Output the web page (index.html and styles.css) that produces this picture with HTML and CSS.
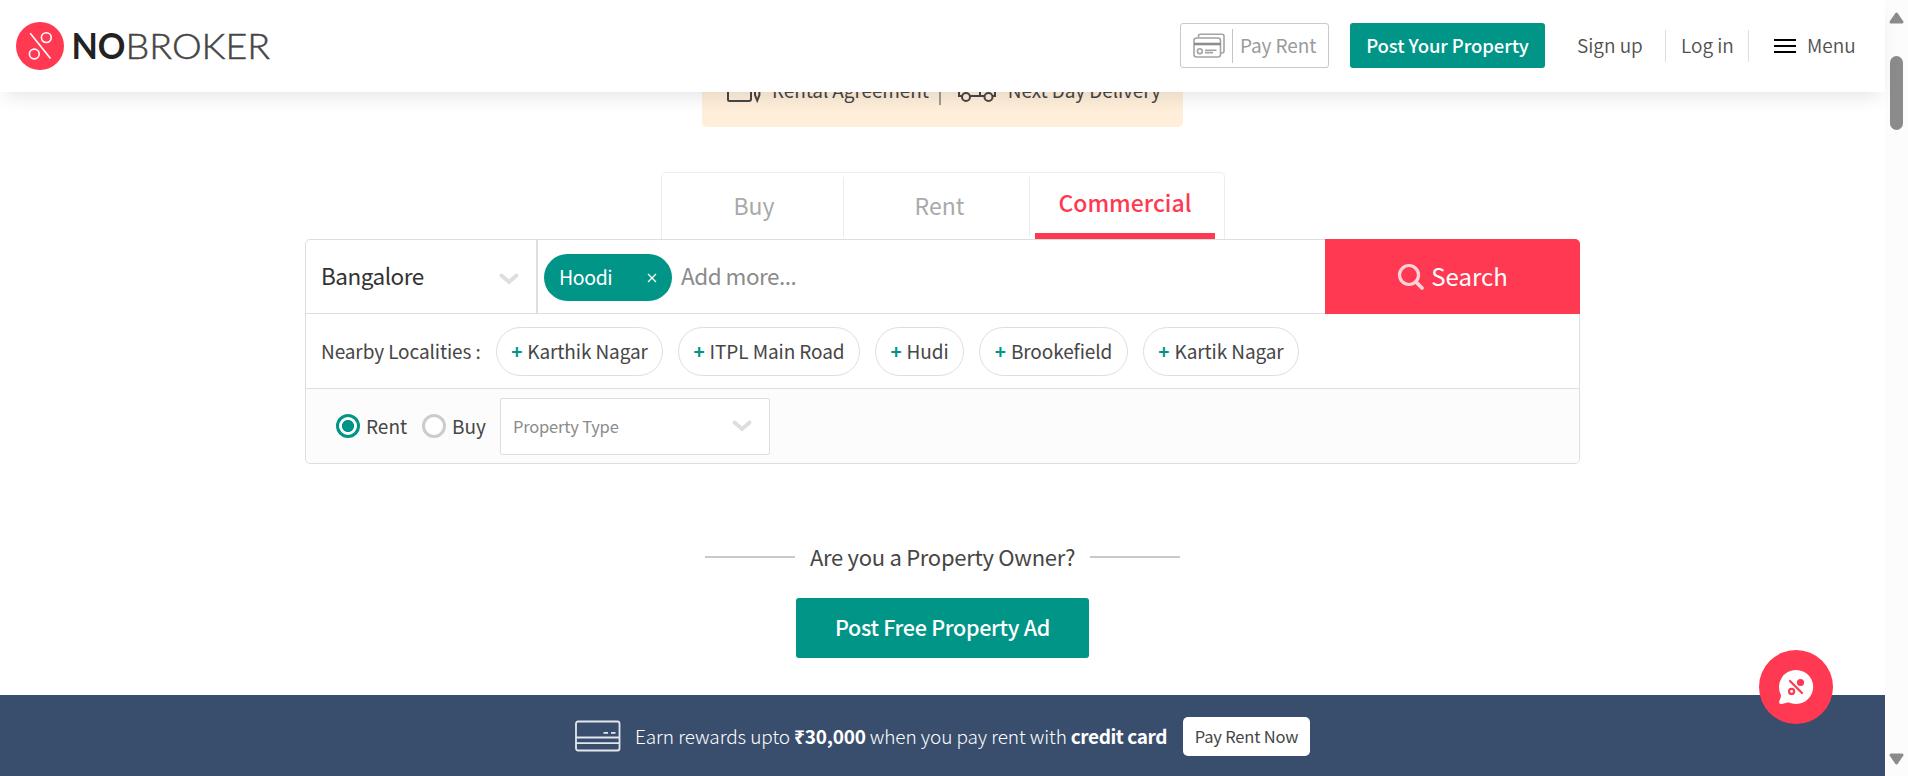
FILE: index.html
```html
<!DOCTYPE html>
<html lang="en">
<head>
<meta charset="utf-8">
<title>NoBroker</title>
<link rel="stylesheet" href="styles.css">
</head>
<body>
<div class="viewport">
  <div class="page">
    <header class="header">
      <svg class="logo" width="270" height="50" viewBox="0 0 270 50">
        <circle cx="24" cy="24" r="24" fill="#ff3952"/>
        <g fill="none" stroke="#fff" stroke-width="1.6">
          <path d="M14.2 11.2 34.5 36.5"/><circle cx="30.3" cy="15.6" r="4.9"/><circle cx="18.3" cy="32" r="4.9"/>
        </g>
        <text class="logo-bold" x="55.5" y="37" textLength="54" lengthAdjust="spacingAndGlyphs">NO</text>
        <text class="logo-thin" x="109.5" y="37" textLength="144.5" lengthAdjust="spacingAndGlyphs">BROKER</text>
      </svg>
      <nav class="nav">
        <a class="pay-rent">
          <svg width="32" height="26" viewBox="0 0 32 26" fill="none" stroke="#a3a3a3" stroke-width="1.6">
            <path d="M5.5 4.5V2.8Q5.5 1.2 7.2 1.2H29Q31 1.2 31 3.2V18Q31 20 29 20H28"/>
            <rect x="1" y="5" width="26.5" height="19" rx="2.5"/>
            <path d="M1 11H27.5" stroke="#8d8d8d" stroke-width="2.6"/>
            <circle cx="6.8" cy="18.2" r="2.4"/><path d="M12 17.2H23.5M12 19.6H20" />
          </svg>
          <span class="pay-rent-text">Pay Rent</span>
        </a>
        <a class="post-property"><span>Post Your Property</span></a>
        <a class="nav-link sign-up"><span>Sign up</span></a>
        <a class="nav-link log-in"><span>Log in</span></a>
        <a class="nav-link menu"><i class="burger"></i><span>Menu</span></a>
      </nav>
    </header>

    <main class="main">
      <div class="promo">
        <svg width="34" height="44" viewBox="0 0 34 44" fill="none" stroke="#464646" stroke-width="2">
          <path d="M1 8V30.5Q1 32 2.5 32H22Q24 32 24 30V8M28 20V26L30.2 31.5L32.4 26V20"/>
        </svg>
        <span class="promo-text agreement">Rental Agreement</span>
        <i class="promo-divider"></i>
        <svg width="38" height="44" viewBox="0 0 38 44" fill="none" stroke="#464646" stroke-width="2">
          <path d="M4 27H1V12H22V27H12M22 17H31L37 22V27H34M22 27H26"/><circle cx="8" cy="28" r="4"/><circle cx="30.5" cy="28" r="4"/>
        </svg>
        <span class="promo-text delivery">Next Day Delivery</span>
      </div>

      <div class="tabs">
        <div class="tab"><span>Buy</span></div>
        <div class="tab"><span>Rent</span></div>
        <div class="tab active"><span>Commercial</span></div>
      </div>

      <section class="panel">
        <div class="search-row">
          <div class="city"><span>Bangalore</span>
            <svg width="20" height="12" viewBox="0 0 20 12"><path d="M2.5 2.5 10 9 17.5 2.5" fill="none" stroke="#dedede" stroke-width="3.8" stroke-linecap="round"/></svg>
          </div>
          <div class="locality">
            <div class="chip"><span>Hoodi</span>
              <svg width="10" height="10" viewBox="0 0 10 10"><path d="M1 1 9 9M9 1 1 9" stroke="#fff" stroke-width="1.3"/></svg>
            </div>
            <span class="placeholder">Add more...</span>
          </div>
          <div class="search">
            <svg width="28" height="28" viewBox="0 0 28 28" fill="none" stroke="#ffd3d9"><circle cx="12" cy="12" r="9.5" stroke-width="3.2"/><path d="M19 19 25 25" stroke-width="3.8" stroke-linecap="round"/></svg>
            <span>Search</span>
          </div>
        </div>
        <div class="nearby-row">
          <span class="nearby-label">Nearby Localities :</span>
          <div class="pill p1"><b>+</b><span>Karthik Nagar</span></div>
          <div class="pill p2"><b>+</b><span>ITPL Main Road</span></div>
          <div class="pill p3"><b>+</b><span>Hudi</span></div>
          <div class="pill p4"><b>+</b><span>Brookefield</span></div>
          <div class="pill p5"><b>+</b><span>Kartik Nagar</span></div>
        </div>
        <div class="filter-row">
          <i class="radio checked"></i><span class="radio-text rent">Rent</span>
          <i class="radio"></i><span class="radio-text buy">Buy</span>
          <div class="select"><span>Property Type</span>
            <svg width="20" height="12" viewBox="0 0 20 12"><path d="M2.5 2.5 10 9 17.5 2.5" fill="none" stroke="#dedede" stroke-width="3.8" stroke-linecap="round"/></svg>
          </div>
        </div>
      </section>

      <div class="owner"><i></i><span>Are you a Property Owner?</span><i></i></div>
      <a class="post-free"><span>Post Free Property Ad</span></a>
    </main>

    <footer class="rewards">
      <svg width="46" height="32" viewBox="0 0 46 32" fill="none" stroke="#e3e7ed" stroke-width="1.8">
        <rect x="1" y="1.5" width="43.5" height="29" rx="2"/><path d="M1 17.5H44.5M1 23.2H44.5M28.5 12.8H33M36 12.8H40.5"/>
      </svg>
      <p class="rewards-text"><span>Earn rewards upto</span><b class="amount">₹30,000</b><span>when you pay rent with</span><b class="card">credit card</b></p>
      <a class="pay-now"><span>Pay Rent Now</span></a>
    </footer>
  </div>
  <div class="scrollbar">
    <svg width="15" height="12" viewBox="0 0 15 12"><path d="M7.5 2 13 10H2Z" fill="#8b8b8b" stroke="#8b8b8b" stroke-width="3" stroke-linejoin="round"/></svg>
    <i class="thumb"></i>
    <svg class="down" width="15" height="12" viewBox="0 0 15 12"><path d="M7.5 10 13 2H2Z" fill="#8b8b8b" stroke="#8b8b8b" stroke-width="3" stroke-linejoin="round"/></svg>
  </div>
  <div class="chat">
    <svg width="36" height="36" viewBox="0 0 36 36">
      <path d="M18 1A17 17 0 1 1 13 34.2C9.5 32.3 6.5 35 3 35C1 35 1 33.5 1.4 32C2 29.5 3.7 28 2.6 25.3A17 17 0 0 1 18 1Z" fill="#fff"/>
      <g stroke="#ff3952" fill="none" stroke-width="2.2" stroke-linecap="round"><path d="M12 12 24 24"/><circle cx="22.5" cy="13.5" r="2.5" fill="#ff3952"/><circle cx="13.6" cy="22.4" r="2.5"/></g>
    </svg>
  </div>
</div>
</body>
</html>
```
FILE: styles.css
```css
* { box-sizing: border-box; }
body {
  margin: 0;
  overflow: hidden;
  font-family: "Noto Sans CJK SC", "Noto Sans", sans-serif;
  font-size: 18px;
  color: #464646;
  background: #fff;
}
span, b { white-space: nowrap; }
svg { display: block; flex: none; }
.viewport { display: flex; width: 1908px; height: 776px; position: relative; overflow: hidden; }
.page { width: 1885px; height: 776px; display: flex; flex-direction: column; }

.header {
  height: 92px;
  flex: none;
  display: flex;
  justify-content: space-between;
  padding-left: 16px;
  background: #fff;
  box-shadow: 0 10px 18px -6px rgba(0, 0, 0, 0.11);
  position: relative;
  z-index: 2;
}
.logo { margin-top: 22px; }
.logo-bold { font: 700 36px Lato, sans-serif; fill: #222; }
.logo-thin { font: 300 36px Lato, sans-serif; fill: #464646; stroke: #464646; stroke-width: 0.5px; }
.nav { display: flex; padding-top: 23px; line-height: 44px; }
.pay-rent {
  display: flex;
  width: 149px;
  height: 45px;
  padding-left: 12px;
  align-items: center;
  border: 1px solid #c9c9c9;
  border-radius: 3px;
  color: #9b9b9b;
  font-size: 19px;
}
.pay-rent-text { margin-left: 7px; padding-left: 7px; border-left: 1px solid #c4c4c4; height: 34px; line-height: 31px; letter-spacing: -0.1px; }
.post-property {
  width: 195px;
  height: 45px;
  margin-left: 21px;
  border-radius: 3px;
  background: #009587;
  color: #fff;
  text-align: center;
  font-weight: 500;
  font-size: 18.5px;
  letter-spacing: -0.1px;
}
.nav-link { font-size: 19px; font-weight: 350; color: #505050; height: 32px; line-height: 30px; margin-top: 7px; display: flex; align-items: center; }
.nav-link span { padding-bottom: 2px; }
.sign-up { width: 121px; padding-left: 32px; border-right: 1px solid #dedede; }
.log-in { width: 83px; padding-left: 15px; border-right: 1px solid #dedede; }
.menu { width: 136px; padding-left: 25px; }
.burger { width: 22px; height: 14px; margin-right: 11px; border-top: 2px solid #000; border-bottom: 2px solid #000; background: linear-gradient(#000, #000) 0 4px / 100% 2px no-repeat; }

.main { height: 603px; flex: none; display: flex; flex-direction: column; align-items: center; }
.promo {
  width: 481px;
  height: 58px;
  margin-top: -23px;
  padding-left: 25px;
  flex: none;
  display: flex;
  background: #ffeed9;
  border-radius: 5px;
  font-size: 19px;
  line-height: 41px;
  letter-spacing: -0.1px;
}
.agreement { margin-left: 11px; }
.promo-divider { width: 2px; height: 36px; background: #9b9b9b; margin: 0 17px 0 10px; }
.delivery { margin-left: 12px; }

.tabs {
  width: 564px;
  height: 67px;
  flex: none;
  margin-top: 45px;
  padding-top: 4px;
  display: flex;
  border: 1px solid #ededed;
  border-bottom: 0;
  border-radius: 5px 5px 0 0;
  font-size: 23px;
  color: #a9a9a9;
}
.tab { width: 182px; height: 60px; line-height: 57px; padding-left: 4px; text-align: center; border-right: 1px solid #ededed; }
.tab + .tab { width: 186px; padding-left: 7px; }
.tab + .tab.active {
  width: 180px;
  height: 62px;
  margin-left: 5px;
  padding-left: 1px;
  line-height: 51px;
  color: #ff3952;
  font-weight: 500;
  border-right: 0;
  border-bottom: 6px solid #ff3952;
}

.panel { width: 1275px; height: 225px; flex: none; border: 1px solid #dedede; border-radius: 5px; }
.search-row { display: flex; height: 74px; border-bottom: 1px solid #dedede; font-size: 22.5px; line-height: 71px; letter-spacing: -0.5px; }
.search-row span { padding-bottom: 2px; }
.city { width: 232px; padding: 0 17px 0 15px; border-right: 2px solid #dedede; display: flex; justify-content: space-between; align-items: center; color: #333; }
.city svg { margin-top: 4px; }
.locality { width: 787px; display: flex; align-items: center; padding-left: 6px; }
.chip { width: 128px; height: 47px; margin-top: 2px; padding: 0 15px 0 15px; border-radius: 24px; background: #009587; color: #fff; display: flex; align-items: center; justify-content: space-between; font-size: 19.5px; line-height: 45px; letter-spacing: -0.4px; }
.placeholder { margin-left: 9px; color: #8b8b8b; }
.search { width: 255px; height: 75px; margin: -1px -1px 0 0; border-radius: 0 5px 0 0; background: #ff3952; color: #fff; display: flex; align-items: center; justify-content: center; gap: 6px; font-size: 24px; line-height: 73px; letter-spacing: 0; }
.nearby-row { display: flex; height: 75px; align-items: center; padding-left: 15px; border-bottom: 1px solid #dedede; font-size: 19px; letter-spacing: -0.1px; gap: 15px; }
.nearby-label { width: 160px; letter-spacing: -0.1px; padding-bottom: 2px; }
.pill { display: flex; align-items: center; justify-content: center; gap: 5px; height: 49px; line-height: 45px; border: 1px solid #dedede; border-radius: 25px; }
.pill span, .pill b { padding-bottom: 2px; }
.pill b { color: #009587; font-weight: 700; }
.p1 { width: 167px; } .p2 { width: 182px; } .p3 { width: 89px; } .p4 { width: 149px; } .p5 { width: 156px; }
.filter-row { display: flex; height: 74px; align-items: center; padding-left: 30px; background: #fcfcfc; border-radius: 0 0 5px 5px; font-size: 19px; }
.radio { width: 24px; height: 24px; border: 3px solid #ccc; border-radius: 50%; background: #fff; }
.radio.checked { border-color: #009587; background: radial-gradient(circle, #009587 5.7px, #fff 6.3px); }
.radio-text { margin-left: 6px; padding-bottom: 2px; }
.rent { width: 56px; }
.buy { width: 48px; }
.select { width: 270px; height: 57px; padding: 0 17px 0 12px; display: flex; align-items: center; justify-content: space-between; background: #fff; border: 1px solid #dedede; border-radius: 2px; font-size: 16.5px; letter-spacing: -0.2px; color: #8b8b8b; }

.owner { display: flex; align-items: center; gap: 15px; margin-top: 75px; height: 36px; font-size: 22px; letter-spacing: -0.28px; }
.owner span { padding-bottom: 3px; }
.owner i { width: 90px; height: 2px; background: #c9c9c9; }
.post-free { width: 293px; height: 60px; margin-top: 23px; border-radius: 3px; background: #009587; color: #fff; font-size: 21.5px; line-height: 57px; text-align: center; font-weight: 500; letter-spacing: -0.3px; }

.rewards { height: 81px; flex: none; display: flex; align-items: center; padding-left: 575px; background: #394e6d; color: #fff; }
.rewards-text { display: flex; margin: 0 0 0 14px; width: 548px; gap: 4px; font-weight: 300; font-size: 19px; letter-spacing: -0.08px; }
.rewards-text b { font-weight: 700; }
.rewards-text .amount { letter-spacing: -0.2px; }
.rewards-text .card { letter-spacing: -0.4px; }
.pay-now { width: 127px; height: 39px; margin-top: 2px; line-height: 38px; border-radius: 5px; background: #fff; color: #464646; text-align: center; font-size: 16.5px; letter-spacing: -0.2px; }

.scrollbar { width: 23px; height: 776px; background: #fcfcfc; display: flex; flex-direction: column; align-items: center; padding-top: 12px; }
.thumb { width: 13px; height: 74px; margin-top: 32px; border-radius: 7px; background: #8b8b8b; }
.down { margin-top: auto; margin-bottom: 11px; }
.chat { position: absolute; left: 1759px; top: 650px; width: 74px; height: 74px; border-radius: 50%; background: #ff3952; display: flex; align-items: center; justify-content: center; z-index: 3; }
```
